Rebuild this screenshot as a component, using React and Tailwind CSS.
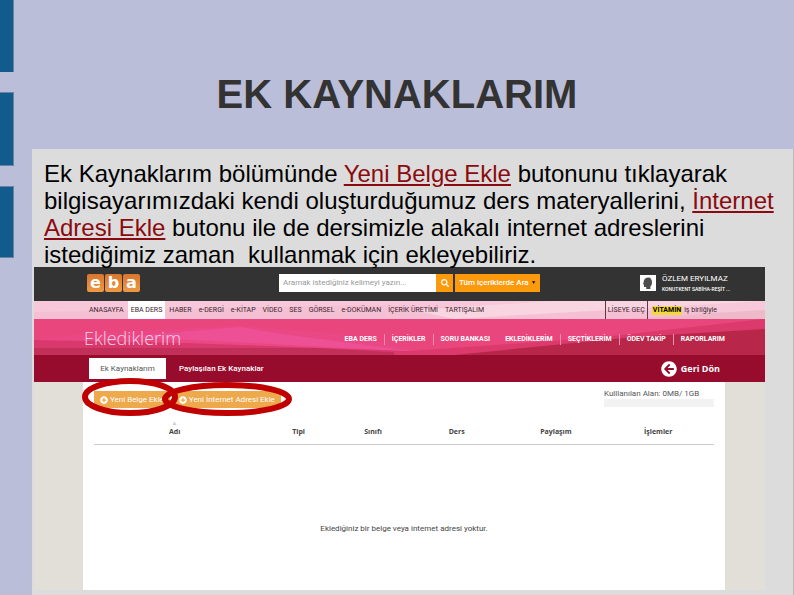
import React, { useState } from 'react';
import { FaSearch, FaPlusCircle, FaArrowCircleLeft } from 'react-icons/fa';

const siteLinks = [
  'ANASAYFA', 'EBA DERS', 'HABER', 'e-DERGİ', 'e-KİTAP', 'VİDEO', 'SES',
  'GÖRSEL', 'e-DOKÜMAN', 'İÇERİK ÜRETİMİ', 'TARTIŞALIM'
];

const lessonLinks = [
  { label: 'EBA DERS', line: true },
  { label: 'İÇERİKLER', line: true },
  { label: 'SORU BANKASI', line: false },
  { label: 'EKLEDİKLERİM', line: true },
  { label: 'SEÇTİKLERİM', line: true },
  { label: 'ÖDEV TAKİP', line: true },
  { label: 'RAPORLARIM', line: false }
];

const columns = [
  { label: 'Adı', width: 'w-[26%]', sorted: true },
  { label: 'Tipi', width: 'w-[14%]' },
  { label: 'Sınıfı', width: 'w-[10%]' },
  { label: 'Ders', width: 'w-[17%]' },
  { label: 'Paylaşım', width: 'w-[15%]' },
  { label: 'İşlemler', width: 'w-[18%]' }
];

function Logo() {
  return (
    <a href="#eba" aria-label="eba" className="flex gap-px">
      {['e', 'b', 'a'].map((l) => (
        <span
          key={l}
          className="flex h-[18px] w-[17px] items-center justify-center rounded-xs bg-linear-to-b from-[#d9752f] to-[#ee9a45] font-['DejaVu_Sans'] text-[16px] leading-[16px] font-bold text-white"
        >
          {l}
        </span>
      ))}
    </a>
  );
}

function TopBar() {
  const [query, setQuery] = useState('');

  return (
    <div className="flex h-[34px] items-center bg-[#333333] pr-10 pb-0.5 pl-[53px]">
      <Logo />
      <form className="ml-[139px] flex h-[18px]" onSubmit={(e) => e.preventDefault()}>
        <input
          type="text"
          aria-label="Arama"
          value={query}
          onChange={(e) => setQuery(e.target.value)}
          placeholder="Aramak istediğiniz kelimeyi yazın..."
          className="w-[157px] bg-white px-1 text-[8px] text-gray-700 outline-none placeholder:text-[#999999]"
        />
        <button type="submit" aria-label="Ara" className="flex w-[17px] items-center justify-center bg-[#fb9a0c] text-white">
          <FaSearch size={8} />
        </button>
        <div className="relative ml-0.5 flex">
          <select aria-label="Arama alanı" className="w-[85px] appearance-none bg-[#fb9a0c] px-1 text-[8px] font-medium text-white outline-none">
            <option>Tüm içeriklerde Ara</option>
          </select>
          <span className="pointer-events-none absolute top-1.5 right-1 text-[5px] leading-none text-black">▼</span>
        </div>
      </form>
      <div className="ml-auto flex w-[85px] items-center gap-1.5">
        <span className="flex size-4 shrink-0 items-center justify-center bg-white">
          <svg viewBox="0 0 16 16" className="size-4" fill="#4d4d4d">
            <path d="M8.500 2.500c-3 0-4.800 2-4.800 4.600L3 9l.9.4v1.800c0 .8.6 1 2.300.9v2h4.200v-2.500c1-.8 1.600-2.300 1.600-4.100 0-3-1.300-5-3.500-5z" />
          </svg>
        </span>
        <div className="whitespace-nowrap text-white">
          <p className="text-[8px] leading-[11px]">ÖZLEM ERYILMAZ</p>
          <p className="text-[5px] leading-[10px] font-medium">KONUTKENT SABİHA-REŞİT ...</p>
        </div>
      </div>
    </div>
  );
}

function SiteNav() {
  return (
    <nav className="relative flex h-[18px] items-stretch bg-[#f6c8d9] pr-10 pl-[52px] text-[7px] text-[#3d2430]">
      <svg className="absolute inset-0 h-full w-full" viewBox="0 0 731 18" preserveAspectRatio="none">
        <path d="M0 11L330 4 731 12v6H0z" fill="#f5c0d3" />
        <path d="M420 18L731 0H520L380 9z" fill="#f8d5e1" />
        <path d="M590 18L731 9v9z" fill="#eeb9c8" />
      </svg>
      <div className="relative flex gap-px">
        {siteLinks.map((l) => (
          <a
            key={l}
            href="#menu"
            className={`flex items-center px-[3px] whitespace-nowrap ${l === 'EBA DERS' ? 'bg-white' : ''}`}
          >
            {l}
          </a>
        ))}
      </div>
      <div className="relative ml-auto flex">
        <a href="#lise" className="flex items-center border-x border-[#5b3a46] px-0.5 whitespace-nowrap">LİSEYE GEÇ</a>
        <span className="flex items-center gap-0.5 pr-2 pl-1 whitespace-nowrap">
          <b className="bg-[#f5d83c] px-px leading-[9px] text-black">VİTAMİN</b>
          iş birliğiyle
        </span>
      </div>
    </nav>
  );
}

function Hero() {
  return (
    <div className="relative flex h-9 items-center justify-between bg-[#e8467c] pr-10 pl-[50px]">
      <svg className="absolute inset-0 h-full w-full" viewBox="0 0 731 36" preserveAspectRatio="none">
        <path d="M0 20L60 14 205 7 300 14 380 30 0 31z" fill="#ea4885" />
        <path d="M90 18L205 8l50 8 130 17L200 23z" fill="#ee5095" />
        <path d="M0 21L150 24 400 33v3H0z" fill="#d8386c" />
        <path d="M0 29h280l130 7H0z" fill="#c22f58" />
        <path d="M360 33L560 19 731 0v36H360z" fill="#dc3a6c" />
        <path d="M420 36L600 18 731 10v26z" fill="#b82749" />
      </svg>
      <h2 className="relative pt-0.5 font-['Open_Sans',sans-serif] text-[18px] font-light text-[#fbd3e2]">Eklediklerim</h2>
      <ul className="relative flex items-center pt-1 text-[7px] font-bold text-white">
        {lessonLinks.map((l, i) => (
          <li
            key={l.label}
            className={`leading-[11px] whitespace-nowrap ${i < lessonLinks.length - 1 ? 'mr-[7px] border-r pr-[7px]' : ''} ${l.line ? 'border-[#f08cae]' : 'border-transparent'}`}
          >
            <a href="#ders">{l.label}</a>
          </li>
        ))}
      </ul>
    </div>
  );
}

function TabBar() {
  return (
    <div className="flex h-[27px] items-center bg-[#970b2c] pr-[45px] pl-[55px] text-[8px]">
      <button type="button" className="h-[21px] w-[77px] bg-white text-[#555555]">Ek Kaynaklarım</button>
      <button type="button" className="ml-[13px] font-medium text-white">Paylaşılan Ek Kaynaklar</button>
      <button type="button" className="ml-auto flex items-center gap-1 font-['Open_Sans',sans-serif] text-[9px] font-bold text-white">
        <FaArrowCircleLeft size={16} />
        Geri Dön
      </button>
    </div>
  );
}

function AddButton({ children }) {
  return (
    <button type="button" className="flex h-[17px] items-center gap-0.5 bg-[#eda94c] px-1.5 text-[8px] whitespace-nowrap text-white">
      <FaPlusCircle size={8} />
      {children}
    </button>
  );
}

function Resources() {
  return (
    <div className="bg-[#e2dfd8] pr-10 pl-[49px]">
      <div className="min-h-[208px] bg-white px-[11px] pt-[7px]">
        <div className="flex items-start justify-between">
          <div className="relative mt-0.5 flex gap-[3px]">
            <AddButton>Yeni Belge Ekle</AddButton>
            <AddButton>Yeni İnternet Adresi Ekle</AddButton>
            {/* Vurgu halkaları */}
            <svg className="pointer-events-none absolute -top-3.5 -left-3 h-10 w-[212px]" fill="none" stroke="#c00000" strokeWidth="6">
              <ellipse cx="48" cy="20" rx="45" ry="16" />
              <ellipse cx="145" cy="22" rx="62" ry="14" />
            </svg>
          </div>
          <div className="w-[110px]">
            <p className="text-[8px] leading-[10px] whitespace-nowrap text-[#555555]">Kulllanılan Alan: 0MB/ 1GB</p>
            <div className="h-2 bg-[#f2f2f2]" />
          </div>
        </div>
        <table className="mt-3 w-full table-fixed text-center text-[#444444]">
          <thead className="font-['Open_Sans',sans-serif] text-[7px]">
            <tr className="h-6 border-b border-[#cccccc]">
              {columns.map((c) => (
                <th key={c.label} className={`relative font-bold ${c.width}`}>
                  {c.sorted && (
                    <span className="absolute top-0 left-0 w-full text-[6px] leading-[6px] text-[#cccccc]">▲</span>
                  )}
                  {c.label}
                </th>
              ))}
            </tr>
          </thead>
          <tbody className="text-[8px]">
            <tr>
              <td colSpan={columns.length} className="pt-[78px] leading-3">
                Eklediğiniz bir belge veya internet adresi yoktur.
              </td>
            </tr>
          </tbody>
        </table>
      </div>
    </div>
  );
}

export default function App() {
  return (
    <div className="flex min-h-screen bg-[#bbbed9]">
      <aside className="flex w-8 shrink-0 flex-col gap-5">
        <div className="h-[72px] w-3.5 border-r border-[#6a84a0] bg-[#115c8c]" />
        <div className="h-[74px] w-3.5 border border-l-0 border-[#6a84a0] bg-[#115c8c]" />
        <div className="h-[72px] w-3.5 border border-l-0 border-[#6a84a0] bg-[#115c8c]" />
      </aside>
      <main className="flex min-w-0 flex-1 flex-col font-['Liberation_Sans',sans-serif]">
        <h1 className="pt-[71px] pr-8 pb-[32px] text-center text-[40px] leading-[46px] font-bold text-[#333333]">
          EK KAYNAKLARIM
        </h1>
        <section className="flex-1 border-r border-[#b8b8b8] bg-[#dcdcdc] pb-[5px]">
          <p className="-mb-px pt-[11px] pl-3 text-[24px] leading-[27px] text-black">
            Ek Kaynaklarım bölümünde <a href="#belge" className="text-[#8b0a10] underline">Yeni Belge Ekle</a> butonunu
            tıklayarak bilgisayarımızdaki kendi oluşturduğumuz ders materyallerini,{' '}
            <a href="#internet" className="text-[#8b0a10] underline">İnternet Adresi Ekle</a> butonu ile de dersimizle
            alakalı internet adreslerini istediğimiz zaman&nbsp; kullanmak için ekleyebiliriz.
          </p>
          <div className="mr-7 ml-0.5 font-[Roboto,sans-serif]">
            <TopBar />
            <SiteNav />
            <Hero />
            <TabBar />
            <Resources />
          </div>
        </section>
      </main>
    </div>
  );
}
